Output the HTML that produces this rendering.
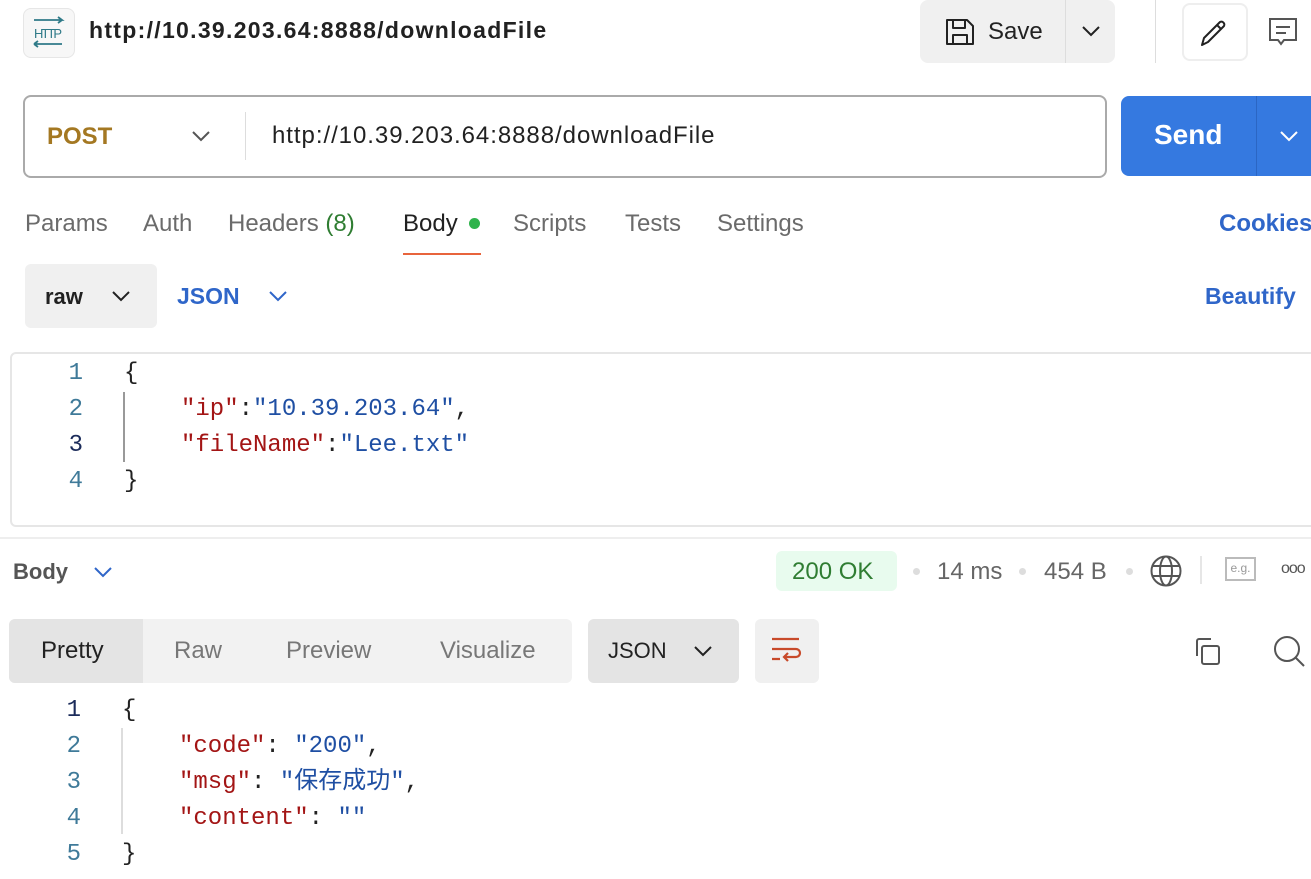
<!DOCTYPE html>
<html><head><meta charset="utf-8"><style>
*{margin:0;padding:0;box-sizing:border-box}
body{width:1311px;height:879px;overflow:hidden;background:#fff;font-family:"Liberation Sans","Noto Sans CJK SC",sans-serif;color:#212121;position:relative}
.a{position:absolute;white-space:nowrap}
.mono{font-family:"Liberation Mono","Noto Sans CJK SC",monospace;font-size:24px;line-height:28px;height:28px}
.ln{color:#3f7a99;width:40px;text-align:right}
.k{color:#a31515}.s{color:#1f4fa3}.p{color:#222}
</style></head><body>
<!-- top bar -->
<div class="a" style="left:23px;top:8px;width:52px;height:50px;border:1px solid #e6e6e6;border-radius:8px;background:#f7f7f7"></div>
<svg class="a" style="left:28px;top:14px" width="42" height="40" viewBox="0 0 42 40"><path d="M6 6h28l-4-3M34 6l-4 3" stroke="#2f7a88" stroke-width="1.8" fill="none"/><text x="20" y="24" font-family="Liberation Sans Narrow,Liberation Sans" font-size="13" fill="#2f7a88" text-anchor="middle" textLength="28">HTTP</text><path d="M6 30h28M6 30l4-3M6 30l4 3" stroke="#2f7a88" stroke-width="1.8" fill="none"/></svg>
<div class="a" style="left:89px;top:17px;font-size:23px;font-weight:bold;color:#212121;letter-spacing:1.3px">http://10.39.203.64:8888/downloadFile</div>
<div class="a" style="left:920px;top:0;width:195px;height:63px;background:#f0f0f0;border-radius:8px"></div>
<div class="a" style="left:1065px;top:0;width:1px;height:63px;background:#ddd"></div>
<svg class="a" style="left:945px;top:18px" width="30" height="28" viewBox="0 0 30 28"><path d="M2 2h20l6 6v18H2z M8 2v8h12V2 M8 26v-9h14v9" stroke="#222" stroke-width="2" fill="none" stroke-linejoin="round"/></svg>
<div class="a" style="left:988px;top:18px;font-size:24px;color:#222">Save</div>
<svg class="a" style="left:1081px;top:24px" width="20" height="14"><path d="M2 3l8 8 8-8" stroke="#222" stroke-width="2" fill="none"/></svg>
<div class="a" style="left:1155px;top:0;width:1px;height:63px;background:#ddd"></div>
<div class="a" style="left:1182px;top:3px;width:66px;height:58px;border:2px solid #eee;border-radius:8px;background:#fff"></div>
<svg class="a" style="left:1199px;top:17px" width="32" height="30"><path d="M3 28l2-7L21 5a3 3 0 014 4L9 25z M18 8l4 4" stroke="#222" stroke-width="2" fill="none" stroke-linejoin="round"/></svg>
<svg class="a" style="left:1268px;top:17px" width="32" height="32"><path d="M2 2h26v21H16l-3 4-3-4H2z M8 10h14M8 16h10" stroke="#555" stroke-width="2" fill="none"/></svg>
<!-- url row -->
<div class="a" style="left:23px;top:95px;width:1084px;height:83px;border:2px solid #aaa;border-radius:8px"></div>
<div class="a" style="left:47px;top:123px;font-size:24px;font-weight:bold;color:#a47822">POST</div>
<svg class="a" style="left:190px;top:128px" width="22" height="16"><path d="M3 4l8 8 8-8" stroke="#555" stroke-width="2" fill="none"/></svg>
<div class="a" style="left:245px;top:112px;width:1px;height:48px;background:#ddd"></div>
<div class="a" style="left:272px;top:122px;font-size:24px;color:#212121;letter-spacing:0.95px">http://10.39.203.64:8888/downloadFile</div>
<div class="a" style="left:1121px;top:96px;width:200px;height:80px;background:#3579e0;border-radius:8px"></div>
<div class="a" style="left:1256px;top:96px;width:1px;height:80px;background:#2b66c4"></div>
<div class="a" style="left:1154px;top:119px;font-size:28px;font-weight:bold;color:#fff">Send</div>
<svg class="a" style="left:1278px;top:128px" width="22" height="16"><path d="M3 4l8 8 8-8" stroke="#fff" stroke-width="2" fill="none"/></svg>
<!-- tabs -->
<div class="a" style="left:25px;top:210px;font-size:24px;color:#6b6b6b">Params</div>
<div class="a" style="left:143px;top:210px;font-size:24px;color:#6b6b6b">Auth</div>
<div class="a" style="left:228px;top:210px;font-size:24px;color:#6b6b6b">Headers <span style="color:#2f7d32">(8)</span></div>
<div class="a" style="left:403px;top:210px;font-size:24px;color:#212121">Body</div>
<div class="a" style="left:469px;top:218px;width:11px;height:11px;border-radius:50%;background:#2fb34c"></div>
<div class="a" style="left:403px;top:253px;width:78px;height:2px;background:#e8643c"></div>
<div class="a" style="left:513px;top:210px;font-size:24px;color:#6b6b6b">Scripts</div>
<div class="a" style="left:625px;top:210px;font-size:24px;color:#6b6b6b">Tests</div>
<div class="a" style="left:717px;top:210px;font-size:24px;color:#6b6b6b">Settings</div>
<div class="a" style="left:1219px;top:210px;font-size:24px;font-weight:bold;color:#2f66c9">Cookies</div>
<!-- raw json -->
<div class="a" style="left:25px;top:264px;width:132px;height:64px;background:#f0f0f0;border-radius:6px"></div>
<div class="a" style="left:45px;top:284px;font-size:22px;font-weight:bold;color:#212121">raw</div>
<svg class="a" style="left:110px;top:288px" width="22" height="16"><path d="M3 4l8 8 8-8" stroke="#222" stroke-width="2" fill="none"/></svg>
<div class="a" style="left:177px;top:283px;font-size:23px;font-weight:bold;color:#2f66c9">JSON</div>
<svg class="a" style="left:267px;top:288px" width="22" height="16"><path d="M3 4l8 8 8-8" stroke="#2f66c9" stroke-width="2" fill="none"/></svg>
<div class="a" style="left:1205px;top:283px;font-size:23px;font-weight:bold;color:#2f66c9">Beautify</div>
<!-- editor -->
<div class="a" style="left:10px;top:352px;width:1310px;height:175px;border:2px solid #e6e6e6;border-radius:6px"></div>
<div class="a" style="left:0;top:537px;width:1311px;height:2px;background:#eee"></div>
<div class="a" style="left:123px;top:392px;width:2px;height:70px;background:#999"></div>
<div class="a mono ln" style="left:43px;top:360px">1</div>
<div class="a mono ln" style="left:43px;top:396px">2</div>
<div class="a mono ln" style="left:43px;top:432px;color:#1b2b5a">3</div>
<div class="a mono ln" style="left:43px;top:468px">4</div>
<div class="a mono p" style="left:124px;top:360px">{</div>
<div class="a mono" style="left:181px;top:396px"><span class="k">"ip"</span><span class="p">:</span><span class="s">"10.39.203.64"</span><span class="p">,</span></div>
<div class="a mono" style="left:181px;top:432px"><span class="k">"fileName"</span><span class="p">:</span><span class="s">"Lee.txt"</span></div>
<div class="a mono p" style="left:124px;top:468px">}</div>
<!-- response bar -->
<div class="a" style="left:13px;top:559px;font-size:22px;font-weight:bold;color:#555">Body</div>
<svg class="a" style="left:92px;top:564px" width="22" height="16"><path d="M3 4l8 8 8-8" stroke="#2f66c9" stroke-width="2" fill="none"/></svg>
<div class="a" style="left:776px;top:551px;width:121px;height:40px;background:#e8fbee;border-radius:6px"></div>
<div class="a" style="left:792px;top:558px;font-size:24px;color:#2f7d32">200 OK</div>
<div class="a" style="left:913px;top:568px;width:7px;height:7px;border-radius:50%;background:#ddd"></div>
<div class="a" style="left:937px;top:558px;font-size:24px;color:#666">14 ms</div>
<div class="a" style="left:1019px;top:568px;width:7px;height:7px;border-radius:50%;background:#ddd"></div>
<div class="a" style="left:1044px;top:558px;font-size:24px;color:#666">454 B</div>
<div class="a" style="left:1126px;top:568px;width:7px;height:7px;border-radius:50%;background:#ddd"></div>
<svg class="a" style="left:1149px;top:554px" width="34" height="34" viewBox="0 0 34 34"><circle cx="17" cy="17" r="14.5" stroke="#555" stroke-width="2" fill="none"/><ellipse cx="17" cy="17" rx="6" ry="14.5" stroke="#555" stroke-width="2" fill="none"/><path d="M3 12h28M3 22h28" stroke="#555" stroke-width="2"/></svg>
<div class="a" style="left:1200px;top:556px;width:2px;height:28px;background:#e6e6e6"></div>
<div class="a" style="left:1225px;top:557px;width:31px;height:24px;border:2px solid #bbb;font-size:12px;color:#999;text-align:center;line-height:19px">e.g.</div>
<div class="a" style="left:1281px;top:560px;font-size:16px;color:#555;letter-spacing:-1px">ooo</div>
<!-- tabs response -->
<div class="a" style="left:9px;top:619px;width:563px;height:64px;background:#f2f2f2;border-radius:6px"></div>
<div class="a" style="left:9px;top:619px;width:134px;height:64px;background:#e4e4e4;border-radius:6px 0 0 6px"></div>
<div class="a" style="left:41px;top:637px;font-size:24px;color:#222">Pretty</div>
<div class="a" style="left:174px;top:637px;font-size:24px;color:#777">Raw</div>
<div class="a" style="left:286px;top:637px;font-size:24px;color:#777">Preview</div>
<div class="a" style="left:440px;top:637px;font-size:24px;color:#777">Visualize</div>
<div class="a" style="left:588px;top:619px;width:151px;height:64px;background:#e4e4e4;border-radius:6px"></div>
<div class="a" style="left:608px;top:638px;font-size:22px;color:#222">JSON</div>
<svg class="a" style="left:692px;top:643px" width="22" height="16"><path d="M3 4l8 8 8-8" stroke="#222" stroke-width="2" fill="none"/></svg>
<div class="a" style="left:755px;top:619px;width:64px;height:64px;background:#f0f0f0;border-radius:6px"></div>
<svg class="a" style="left:770px;top:636px" width="34" height="32" viewBox="0 0 34 32"><path d="M2 3h27M2 13h24a4 4 0 010 8H14M18 17l-4 4 4 4M2 23h8" stroke="#c84a2a" stroke-width="2.2" fill="none"/></svg>
<svg class="a" style="left:1194px;top:636px" width="32" height="32" viewBox="0 0 32 32"><rect x="8" y="10" width="17" height="18" rx="2" stroke="#555" stroke-width="2" fill="none"/><path d="M3 20V5a2 2 0 012-2h12" stroke="#555" stroke-width="2" fill="none"/></svg>
<svg class="a" style="left:1271px;top:634px" width="40" height="36" viewBox="0 0 40 36"><circle cx="16" cy="15" r="12" stroke="#555" stroke-width="2" fill="none"/><path d="M25 24l8 8" stroke="#555" stroke-width="2"/></svg>
<!-- response code -->
<div class="a" style="left:121px;top:728px;width:2px;height:106px;background:#ddd"></div>
<div class="a mono ln" style="left:41px;top:697px;color:#1b2b5a">1</div>
<div class="a mono ln" style="left:41px;top:733px">2</div>
<div class="a mono ln" style="left:41px;top:769px">3</div>
<div class="a mono ln" style="left:41px;top:805px">4</div>
<div class="a mono ln" style="left:41px;top:841px">5</div>
<div class="a mono p" style="left:122px;top:697px">{</div>
<div class="a mono" style="left:179px;top:733px"><span class="k">"code"</span><span class="p">: </span><span class="s">"200"</span><span class="p">,</span></div>
<div class="a mono" style="left:179px;top:769px"><span class="k">"msg"</span><span class="p">: </span><span class="s">"保存成功"</span><span class="p">,</span></div>
<div class="a mono" style="left:179px;top:805px"><span class="k">"content"</span><span class="p">: </span><span class="s">""</span></div>
<div class="a mono p" style="left:122px;top:841px">}</div>
</body></html>
